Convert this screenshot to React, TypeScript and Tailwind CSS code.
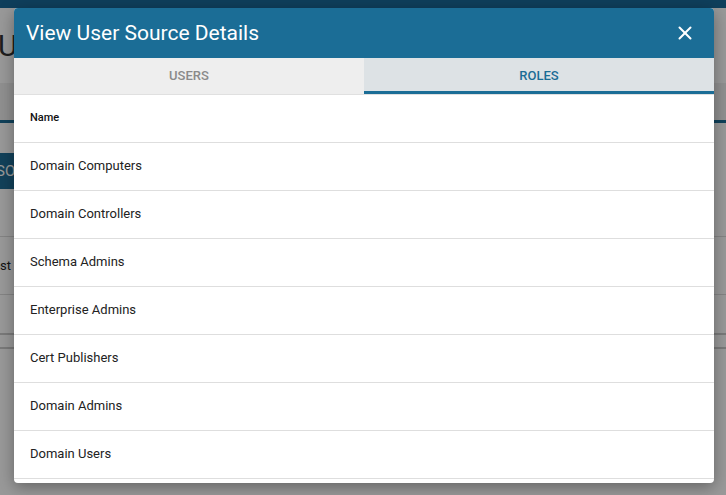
import { X } from "lucide-react";

const roles = [
  "Domain Computers",
  "Domain Controllers",
  "Schema Admins",
  "Enterprise Admins",
  "Cert Publishers",
  "Domain Admins",
  "Domain Users",
];

function BackgroundPage() {
  return (
    <div className="flex flex-col h-[495px] bg-white">
      <div className="h-[8px] bg-[#1a6a99] shrink-0" />
      <div className="h-[75px] flex items-center">
        <h1 className="text-[30px] text-[#333] -ml-[2px] leading-none">User Sources</h1>
      </div>
      <div className="h-[40px] bg-[#f0f0f0] border-b-[3px] border-[#1b6d96]" />
      <div className="h-[30px]" />
      <div className="flex">
        <div className="h-[36px] w-[80px] bg-[#1e6d96] text-white flex items-center text-[15px] -ml-[4px]">
          <span>SOURCE</span>
        </div>
      </div>
      <div className="h-[48px] border-b border-[#ddd]" />
      <div className="h-[58px] flex items-center border-b border-[#ddd] text-[13px] text-[#222]">
        <span className="-ml-[14px]">Test</span>
      </div>
      <div className="h-[40px] border-b-2 border-[#ccc]" />
      <div className="h-[14px] border-b-2 border-[#ccc]" />
    </div>
  );
}

export default function App() {
  return (
    <div className="relative w-[726px] h-[495px] overflow-hidden font-['Roboto',sans-serif]">
      <BackgroundPage />
      {/* Backdrop */}
      <div className="absolute inset-0 bg-black/40" />

      {/* Dialog */}
      <div className="absolute left-[14px] top-[8px] w-[700px] h-[475px] bg-white rounded-[4px] overflow-hidden shadow-[0_4px_16px_rgba(0,0,0,0.35)] flex flex-col">
        <div className="h-[50px] bg-[#1b6d96] flex items-center justify-between pl-[12px] pr-[18px] shrink-0">
          <h2 className="text-white text-[21px] leading-none">View User Source Details</h2>
          <X className="text-white w-[22px] h-[22px]" strokeWidth={2.2} />
        </div>

        <div className="flex h-[37px] shrink-0 border-b border-[#e0e0e0]">
          <div className="flex-1 flex items-center justify-center bg-[#eeeeee] text-[#8a8a8a] text-[13px] font-medium uppercase">
            Users
          </div>
          <div className="flex-1 flex items-center justify-center bg-[#dde2e5] text-[#1b6d96] text-[13px] font-medium uppercase border-b-[3px] border-[#1b6d96] pt-[3px]">
            Roles
          </div>
        </div>

        <div className="flex flex-col">
          <div className="h-[48px] flex items-center px-[16px] border-b border-[#dedede] text-[11px] font-medium text-[#111]">
            Name
          </div>
          {roles.map((role) => (
            <div
              key={role}
              className="h-[48px] flex items-center px-[16px] pb-[2px] border-b border-[#dedede] text-[13px] text-[#222]"
            >
              {role}
            </div>
          ))}
        </div>
      </div>
    </div>
  );
}
